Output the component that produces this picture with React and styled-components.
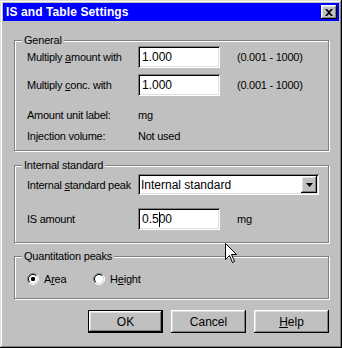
import React from 'react';
import styled, { createGlobalStyle } from 'styled-components';

const GlobalStyle = createGlobalStyle`
  html, body {
    margin: 0;
    padding: 0;
    background: #c0c0c0;
  }
  body {
    font-family: "Liberation Sans", Arial, sans-serif;
    font-size: 11px;
    color: #000;
  }
`;

const raised = `
  box-shadow: inset -1px -1px #000, inset 1px 1px #fff,
    inset -2px -2px #808080, inset 2px 2px #dfdfdf;
`;

const sunken = `
  box-shadow: inset 1px 1px #808080, inset -1px -1px #fff,
    inset 2px 2px #000, inset -2px -2px #dfdfdf;
`;

const Window = styled.div`
  position: relative;
  width: 342px;
  height: 348px;
  box-sizing: border-box;
  padding: 3px;
  background: #c0c0c0;
  box-shadow: inset -1px -1px #000, inset 1px 1px #dfdfdf,
    inset -2px -2px #808080, inset 2px 2px #fff;
  display: flex;
  flex-direction: column;
`;

const TitleBar = styled.div`
  height: 18px;
  flex: none;
  background: #0000ff;
  display: flex;
  align-items: center;
  justify-content: space-between;
  padding: 0 2px 0 3px;
`;

const Title = styled.span`
  color: #fff;
  font-weight: bold;
  font-size: 12px;
  letter-spacing: 0.1px;
`;

const CloseButton = styled.div`
  width: 16px;
  height: 14px;
  background: #c0c0c0;
  ${raised}
  display: flex;
  align-items: center;
  justify-content: center;
`;

const Body = styled.div`
  flex: 1;
  display: flex;
  flex-direction: column;
  padding: 19px 10px 0 11px;
`;

const Group = styled.div`
  position: relative;
  border: 1px solid #808080;
  box-shadow: inset 1px 1px #fff, 1px 1px #fff;
  padding: ${(p) => p.$pad};
  margin-top: ${(p) => p.$mt || 0}px;
  display: flex;
  flex-direction: column;
`;

const Legend = styled.span`
  position: absolute;
  left: 7px;
  top: -7px;
  line-height: 13px;
  padding: 0 2px;
  background: #c0c0c0;
  letter-spacing: -0.2px;
`;

const Row = styled.div`
  display: grid;
  grid-template-columns: 111px auto 1fr;
  align-items: center;
  height: ${(p) => p.$h}px;
  margin-top: ${(p) => p.$mt || 0}px;
  letter-spacing: -0.25px;
`;

const Edit = styled.div`
  width: 82px;
  height: 22px;
  box-sizing: border-box;
  background: #fff;
  ${sunken}
  padding: 0 3px 0 4px;
  display: flex;
  align-items: center;
  font-size: 12px;
  letter-spacing: 0;
`;

const Caret = styled.span`
  display: inline-block;
  width: 1px;
  height: 15px;
  background: #000;
  margin: 0 -1px 0 0;
`;

const Aside = styled.span`
  padding-left: 17px;
`;

const Combo = styled.div`
  width: 181px;
  height: 21px;
  box-sizing: border-box;
  background: #fff;
  ${sunken}
  padding: 2px 2px 2px 3px;
  display: flex;
  align-items: center;
  justify-content: space-between;
  font-size: 12px;
  letter-spacing: 0;
`;

const DropButton = styled.div`
  width: 16px;
  height: 17px;
  background: #c0c0c0;
  ${raised}
  display: flex;
  align-items: center;
  justify-content: center;
`;

const RadioRow = styled.div`
  display: grid;
  grid-template-columns: 66px auto;
  align-items: center;
  height: 16px;
  letter-spacing: -0.2px;
`;

const RadioItem = styled.label`
  display: flex;
  align-items: center;
  gap: 5px;
`;

const Buttons = styled.div`
  display: flex;
  justify-content: flex-end;
  gap: 8px;
  margin-top: 11px;
`;

const Button = styled.div`
  width: 75px;
  height: 23px;
  box-sizing: border-box;
  background: #c0c0c0;
  display: flex;
  align-items: center;
  justify-content: center;
  font-size: 12px;
  ${(p) =>
    p.$default
      ? `box-shadow: inset 0 0 0 1px #000, inset -2px -2px #000, inset 2px 2px #fff,
          inset -3px -3px #808080, inset 3px 3px #dfdfdf;`
      : raised}
`;

const Cursor = styled.svg`
  position: absolute;
  left: 225px;
  top: 243px;
`;

function Radio({ checked }) {
  return (
    <svg width="12" height="12" viewBox="0 0 12 12">
      <circle cx="6" cy="6" r="4.5" fill="#fff" />
      <path d="M2.1 9.9 A5.5 5.5 0 0 1 9.9 2.1" fill="none" stroke="#808080" />
      <path d="M9.9 2.1 A5.5 5.5 0 0 1 2.1 9.9" fill="none" stroke="#fff" />
      <path d="M2.8 9.2 A4.5 4.5 0 0 1 9.2 2.8" fill="none" stroke="#000" />
      <path d="M9.2 2.8 A4.5 4.5 0 0 1 2.8 9.2" fill="none" stroke="#dfdfdf" />
      {checked && <rect x="4" y="4" width="4" height="4" rx="1.2" fill="#000" />}
    </svg>
  );
}

export default function App() {
  return (
    <>
      <GlobalStyle />
      <Window>
        <TitleBar>
          <Title>IS and Table Settings</Title>
          <CloseButton>
            <svg width="8" height="7" viewBox="0 0 8 7">
              <path d="M0 0h2l2 2 2-2h2L5 3.5 8 7H6L4 5 2 7H0l3-3.5z" fill="#000" />
            </svg>
          </CloseButton>
        </TitleBar>
        <Body>
          <Group $pad="5px 0 4px 12px">
            <Legend>General</Legend>
            <Row $h={22}>
              <span>Multiply <u>a</u>mount with</span>
              <Edit>1.000</Edit>
              <Aside>(0.001 - 1000)</Aside>
            </Row>
            <Row $h={22} $mt={6}>
              <span>Multiply <u>c</u>onc. with</span>
              <Edit>1.000</Edit>
              <Aside>(0.001 - 1000)</Aside>
            </Row>
            <Row $h={20} $mt={9}>
              <span>Amount unit label:</span>
              <span>mg</span>
            </Row>
            <Row $h={20} $mt={1}>
              <span>Injection volume:</span>
              <span>Not used</span>
            </Row>
          </Group>

          <Group $pad="8px 0 12px 12px" $mt={14}>
            <Legend>Internal standard</Legend>
            <Row $h={21}>
              <span>Internal <u>s</u>tandard peak</span>
              <Combo>
                <span>Internal standard</span>
                <DropButton>
                  <svg width="7" height="4" viewBox="0 0 7 4">
                    <path d="M0 0h7L3.5 4z" fill="#000" />
                  </svg>
                </DropButton>
              </Combo>
            </Row>
            <Row $h={22} $mt={13}>
              <span>IS amount</span>
              <Edit>
                0.5<Caret />00
              </Edit>
              <Aside>mg</Aside>
            </Row>
          </Group>

          <Group $pad="14px 0 11px 12px" $mt={13}>
            <Legend>Quantitation peaks</Legend>
            <RadioRow>
              <RadioItem>
                <Radio checked />
                <span>A<u>r</u>ea</span>
              </RadioItem>
              <RadioItem>
                <Radio />
                <span>H<u>e</u>ight</span>
              </RadioItem>
            </RadioRow>
          </Group>

          <Buttons>
            <Button $default>OK</Button>
            <Button>Cancel</Button>
            <Button>
              <span><u>H</u>elp</span>
            </Button>
          </Buttons>
        </Body>
        <Cursor width="13" height="21" viewBox="0 0 13 21">
          <path
            d="M0.5 0.5V16.5L4.5 12.5L7.5 19.5L9.5 18.5L6.5 11.5H11.5Z"
            fill="#fff"
            stroke="#000"
            strokeLinejoin="miter"
          />
        </Cursor>
      </Window>
    </>
  );
}
